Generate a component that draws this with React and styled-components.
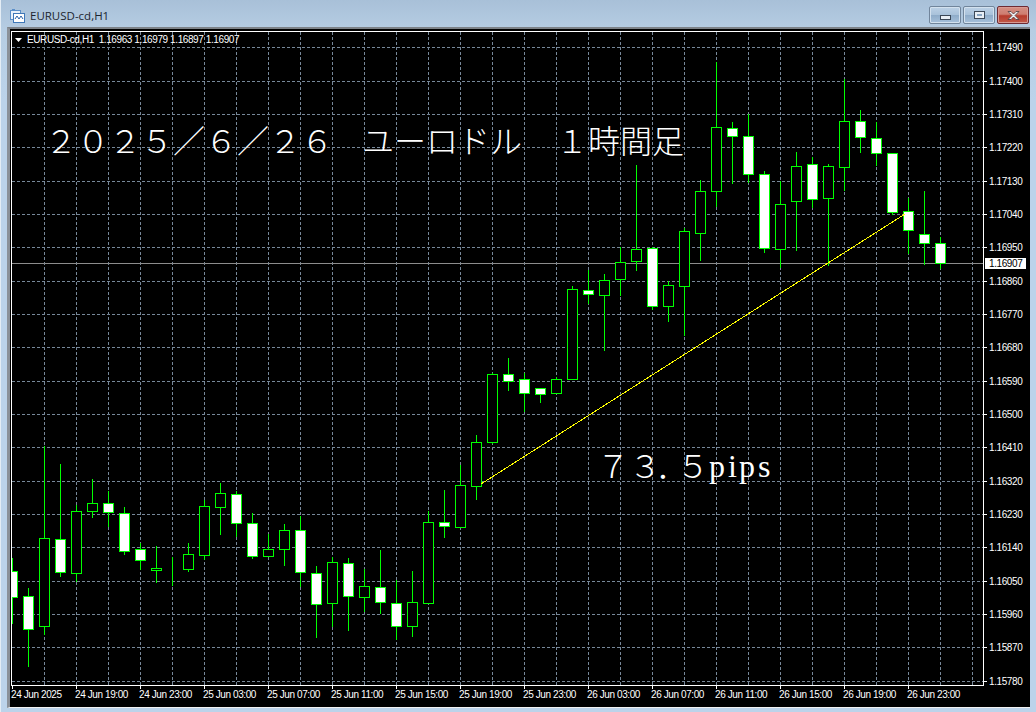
import React from "react";
import styled, { createGlobalStyle } from "styled-components";

const GlobalStyle = createGlobalStyle`
  html, body {
    margin: 0;
    padding: 0;
    background: #bcd3ea;
  }
  #root {
    width: 1036px;
    height: 712px;
    overflow: hidden;
  }
`;

const Window = styled.div`
  width: 1036px;
  height: 712px;
  display: flex;
  flex-direction: column;
  box-sizing: border-box;
  padding: 0 6px 4px 6px;
  background: linear-gradient(180deg, #a8c0d8 0, #b6cde3 30px, #bcd3ea 100px, #bcd3ea 100%);
  border-left: 1px solid #e4edf5;
`;

const TitleBar = styled.div`
  height: 27px;
  flex: none;
  box-sizing: border-box;
  padding-top: 3px;
  display: flex;
  align-items: center;
  margin-left: 3px;
  gap: 5px;
`;

const AppIcon = styled.svg`
  width: 15px;
  height: 15px;
  flex: none;
`;

const Caption = styled.span`
  font: 11.5px "Open Sans", "Liberation Sans", sans-serif;
  color: #1c2530;
  flex: 1;
`;

const Controls = styled.div`
  display: flex;
  gap: 2px;
  margin-right: 1px;
`;

const WinButton = styled.div`
  width: 32px;
  height: 18px;
  box-sizing: border-box;
  display: flex;
  align-items: center;
  justify-content: center;
  border-radius: 2px;
  border: 1px solid ${(p) => (p.$close ? "#6e2a32" : "#71859b")};
  box-shadow: inset 0 0 0 1px ${(p) => (p.$close ? "#d99a92" : "#d3e1ee")};
  background: ${(p) =>
    p.$close
      ? "linear-gradient(180deg, #d48f84 0, #cf7d70 45%, #b63b2c 55%, #c25a49 100%)"
      : "linear-gradient(180deg, #bcd1e6 0, #a9c2da 48%, #8facc9 52%, #a6c0da 100%)"};
`;

const MinGlyph = styled.span`
  width: 9px;
  height: 3px;
  margin-top: 4px;
  box-sizing: content-box;
  background: #e8eef4;
  border: 1px solid #3b4756;
`;

const RestoreGlyph = styled.span`
  width: 5px;
  height: 2px;
  box-sizing: content-box;
  background: #8aa6c2;
  border: 2px solid #e8eef4;
  outline: 1px solid #3b4756;
`;

const ChartFrame = styled.div`
  flex: 1;
  min-height: 0;
  display: flex;
  box-sizing: border-box;
  border-style: solid;
  border-width: 2px 0 1px 3px;
  border-color: #7d8288 transparent #f2f2f2 #8b9199;
`;

const ChartSvg = styled.svg`
  display: block;
  width: 1020px;
  height: 678px;
  background: #000;
`;

const AxisText = styled.text`
  font: 10px "Liberation Sans", Arial, sans-serif;
  fill: ${(p) => p.$fill || "#fff"};
  letter-spacing: -0.4px;
  white-space: pre;
`;

const NoteText = styled.text`
  font-family: "Noto Sans CJK JP", sans-serif;
  font-size: 32px;
  font-weight: 300;
  fill: #fff;
`;

const LatinNote = styled.text`
  font-family: "Liberation Serif", serif;
  font-size: 32px;
  fill: #fff;
`;

const GRID = "#778899";
const LIME = "#00ff00";

// [body colour, high, open, close, low] in page pixels, one candle every 16px
const CANDLES = [
  ["w", 558, 571, 597, 623],
  ["w", 588, 596, 629, 666],
  ["b", 446, 538, 626, 634],
  ["w", 464, 539, 572, 576],
  ["b", 505, 511, 573, 581],
  ["b", 479, 503, 511, 517],
  ["w", 491, 503, 512, 526],
  ["w", 507, 513, 551, 554],
  ["w", 543, 549, 560, 569],
  ["b", 546, 568, 570, 582],
  ["b", 557, 570, 570, 585],
  ["b", 543, 554, 569, 571],
  ["b", 500, 506, 555, 559],
  ["b", 483, 493, 507, 534],
  ["w", 491, 494, 523, 536],
  ["w", 513, 523, 556, 558],
  ["b", 534, 549, 556, 556],
  ["b", 524, 530, 549, 565],
  ["w", 516, 530, 572, 586],
  ["w", 566, 573, 604, 637],
  ["b", 557, 562, 603, 626],
  ["w", 558, 563, 596, 630],
  ["b", 569, 586, 597, 611],
  ["w", 550, 587, 602, 613],
  ["w", 580, 603, 626, 639],
  ["b", 571, 602, 626, 636],
  ["b", 511, 522, 603, 603],
  ["w", 490, 522, 526, 537],
  ["b", 465, 485, 527, 527],
  ["b", 435, 442, 486, 499],
  ["b", 373, 374, 442, 443],
  ["w", 358, 374, 381, 390],
  ["w", 373, 379, 393, 411],
  ["w", 388, 388, 394, 402],
  ["b", 377, 379, 393, 393],
  ["b", 286, 289, 379, 379],
  ["w", 270, 290, 294, 303],
  ["b", 274, 280, 295, 350],
  ["b", 247, 262, 279, 295],
  ["b", 165, 249, 261, 270],
  ["w", 247, 248, 306, 309],
  ["b", 281, 285, 306, 321],
  ["b", 228, 231, 286, 335],
  ["b", 180, 191, 233, 260],
  ["b", 62, 127, 191, 206],
  ["w", 122, 128, 136, 183],
  ["w", 114, 136, 174, 182],
  ["w", 171, 174, 248, 252],
  ["b", 181, 204, 249, 267],
  ["b", 152, 166, 201, 250],
  ["w", 157, 164, 199, 207],
  ["b", 164, 166, 198, 265],
  ["b", 79, 121, 167, 190],
  ["w", 110, 121, 137, 152],
  ["w", 122, 138, 153, 165],
  ["w", 153, 153, 212, 214],
  ["w", 198, 211, 230, 253],
  ["w", 191, 234, 243, 264],
  ["w", 237, 243, 263, 268],
];

const PRICE_ROWS = [
  [47, "1.17490"], [81, "1.17400"], [114, "1.17310"], [147, "1.17220"], [181, "1.17130"],
  [214, "1.17040"], [247, "1.16950"], [281, "1.16860"], [314, "1.16770"], [347, "1.16680"],
  [381, "1.16590"], [414, "1.16500"], [447, "1.16410"], [481, "1.16320"], [514, "1.16230"],
  [547, "1.16140"], [581, "1.16050"], [614, "1.15960"], [647, "1.15870"], [681, "1.15780"],
];

const TIME_LABELS = [
  "24 Jun 2025", "24 Jun 19:00", "24 Jun 23:00", "25 Jun 03:00", "25 Jun 07:00",
  "25 Jun 11:00", "25 Jun 15:00", "25 Jun 19:00", "25 Jun 23:00", "26 Jun 03:00",
  "26 Jun 07:00", "26 Jun 11:00", "26 Jun 15:00", "26 Jun 19:00", "26 Jun 23:00",
];

const GRID_COLUMNS = Array.from({ length: 30 }, (_, i) => 44 + 32 * i);

const Candle = ({ x, kind, high, top, bottom, low }) => (
  <g>
    <line x1={x + 0.5} x2={x + 0.5} y1={high} y2={low + 1} stroke={LIME} />
    <rect
      x={x - 4.5}
      y={top + 0.5}
      width={10}
      height={Math.max(bottom - top, 0)}
      fill={kind === "w" ? "#fff" : "#000"}
      stroke={LIME}
    />
  </g>
);

const Chart = () => (
  <ChartSvg viewBox="10 29 1020 678" shapeRendering="crispEdges">
    <defs>
      <clipPath id="plot">
        <rect x={12} y={32} width={971} height={653} />
      </clipPath>
    </defs>

    {PRICE_ROWS.map(([y]) => (
      <line key={y} x1={12} x2={983} y1={y + 0.5} y2={y + 0.5} stroke={GRID} strokeDasharray="3 2" />
    ))}
    {GRID_COLUMNS.map((x) => (
      <line key={x} x1={x + 0.5} x2={x + 0.5} y1={32} y2={685} stroke={GRID} strokeDasharray="3 2" />
    ))}

    <line x1={12} x2={983} y1={263.5} y2={263.5} stroke="#8c8c8c" />

    <g clipPath="url(#plot)">
      {CANDLES.map(([kind, high, top, bottom, low], i) => (
        <Candle key={i} x={12 + 16 * i} kind={kind} high={high} top={top} bottom={bottom} low={low} />
      ))}
    </g>

    <line x1={481} y1={484} x2={905} y2={214} stroke="#ffff00" />

    <rect x={11.5} y={31.5} width={972} height={654} fill="none" stroke="#fff" />

    <polygon points="15,38 22,38 18.5,42" fill="#fff" shapeRendering="auto" />
    <AxisText x={27} y={43}>EURUSD-cd,H1  1.16963 1.16979 1.16897 1.16907</AxisText>

    {PRICE_ROWS.map(([y, label]) => (
      <g key={label}>
        <line x1={984} x2={987} y1={y + 0.5} y2={y + 0.5} stroke="#fff" />
        <AxisText x={989} y={y + 4}>{label}</AxisText>
      </g>
    ))}

    <rect x={985} y={258} width={41} height={11} fill="#fff" />
    <AxisText x={989} y={267} $fill="#000">1.16907</AxisText>

    {TIME_LABELS.map((label, i) => (
      <g key={label}>
        <line x1={12.5 + 64 * i} x2={12.5 + 64 * i} y1={686} y2={689} stroke="#fff" />
        <AxisText x={11 + 64 * i} y={698}>{label}</AxisText>
      </g>
    ))}

    <g shapeRendering="auto">
      <NoteText x={45} y={153}>２０２５／６／２６</NoteText>
      <NoteText x={362} y={153}>ユーロドル</NoteText>
      <NoteText x={556} y={153}>１時間足</NoteText>
      <NoteText x="597 629 656 677" y={478}>７３．５</NoteText>
      <LatinNote x="709 728 739 758" y={477}>pips</LatinNote>
    </g>
  </ChartSvg>
);

export default function App() {
  return (
    <>
      <GlobalStyle />
      <Window>
        <TitleBar>
          <AppIcon viewBox="0 0 15 15">
            <rect x="0.5" y="2.5" width="10" height="9" fill="#e8f1fb" stroke="#5b8fc9" />
            <rect x="3.5" y="5.5" width="11" height="9" fill="#ffffff" stroke="#3f78b8" />
            <path d="M5 11l2-3 2 3 2-3 2 3" fill="none" stroke="#2a62a8" />
            <path d="M2 1h3v2H2z" fill="#5b8fc9" />
          </AppIcon>
          <Caption>EURUSD-cd,H1</Caption>
          <Controls>
            <WinButton><MinGlyph /></WinButton>
            <WinButton><RestoreGlyph /></WinButton>
            <WinButton $close>
              <svg width="15" height="11" viewBox="0 0 15 11">
                <path d="M2 1.500h3l2.500 2.500 2.500-2.500h3l-4 4 4 4h-3l-2.500-2.500-2.500 2.500h-3l4-4z" fill="#eef1f4" stroke="#4c3a3e" strokeWidth="0.8" />
              </svg>
            </WinButton>
          </Controls>
        </TitleBar>
        <ChartFrame>
          <Chart />
        </ChartFrame>
      </Window>
    </>
  );
}
